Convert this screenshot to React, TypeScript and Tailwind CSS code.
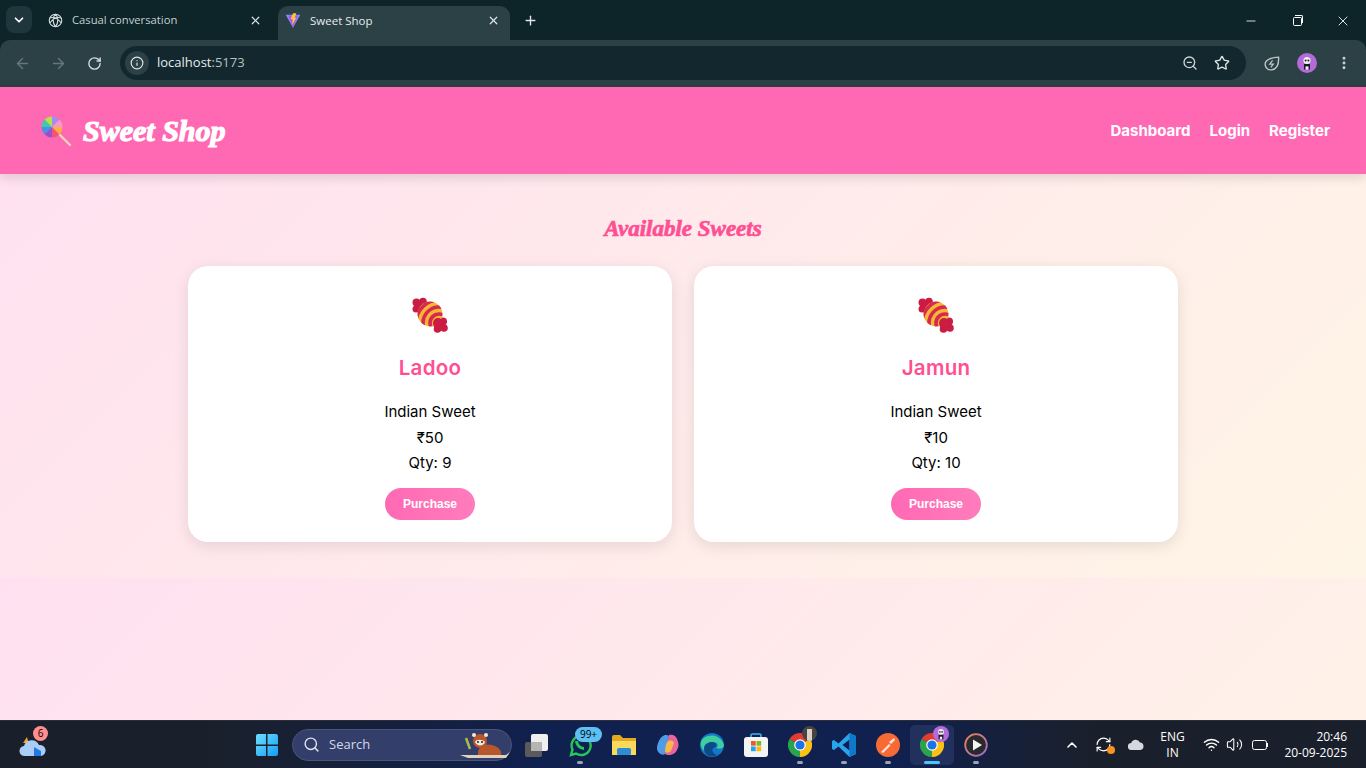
import { ArrowLeft, ArrowRight, ChevronDown, ChevronUp, EllipsisVertical, Info, Minus, Plus, RefreshCw, RotateCw, Search, Star, Volume2, Wifi, X, ZoomOut } from 'lucide-react';

const sweets = [
  { name: 'Ladoo', price: '₹50', qty: 9 },
  { name: 'Jamun', price: '₹10', qty: 10 },
];

const Chrome = ({ size = 24 }: { size?: number }) => (
  <svg width={size} height={size} viewBox="0 0 24 24">
    <path d="M12 12L1.6 6A12 12 0 0 1 22.4 6Z" fill="#e33b2e" />
    <path d="M12 12L22.4 6A12 12 0 0 1 12 24Z" fill="#fbc116" />
    <path d="M12 12L12 24A12 12 0 0 1 1.6 6Z" fill="#2ba24c" />
    <circle cx="12" cy="12" r="5.8" fill="#fff" />
    <circle cx="12" cy="12" r="4.6" fill="#1a73e8" />
  </svg>
);

const Panda = ({ size = 20 }: { size?: number }) => (
  <svg width={size} height={size} viewBox="0 0 20 20">
    <circle cx="10" cy="10" r="10" fill="#b46ad8" />
    <circle cx="10" cy="7.5" r="3.6" fill="#eee" />
    <circle cx="8.6" cy="7.4" r="1" fill="#222" />
    <circle cx="11.4" cy="7.4" r="1" fill="#222" />
    <path d="M7 11h6v5.5h-1.6v-3h-2.8v3H7z" fill="#1b1b1b" />
    <path d="M8.6 13.5h2.8v3H8.6z" fill="#eee" />
  </svg>
);

const Lollipop = () => {
  const colors = ['#fbb040', '#f0567a', '#9b4fc9', '#4f8fe8', '#3fc8b0', '#b7e04f', '#a58cf0', '#f59ac0'];
  return (
    <svg width="32" height="32" viewBox="0 0 32 32">
      <path d="M17 17L30 30" stroke="#f0d9b5" strokeWidth="2.2" strokeLinecap="round" />
      {colors.map((c, i) => {
        const a = (i * Math.PI) / 4;
        const b = ((i + 1) * Math.PI) / 4;
        const r = 10.5;
        return (
          <path
            key={c}
            d={`M12 12Q${12 + 8 * Math.cos(a + 0.9)} ${12 + 8 * Math.sin(a + 0.9)} ${12 + r * Math.cos(b)} ${12 + r * Math.sin(b)}A${r} ${r} 0 0 0 ${12 + r * Math.cos(a)} ${12 + r * Math.sin(a)}Z`}
            fill={c}
          />
        );
      })}
    </svg>
  );
};

const Candy = ({ id }: { id: string }) => (
  <svg width="36" height="36" viewBox="0 0 36 36">
    <defs>
      <clipPath id={id}>
        <circle cx="18" cy="17" r="12.5" />
      </clipPath>
    </defs>
    <g fill="#cb1c44">
      <circle cx="4.5" cy="5.5" r="4" />
      <circle cx="11" cy="4.5" r="3.8" />
      <circle cx="4" cy="12" r="3.5" />
      <circle cx="9" cy="9.5" r="5" />
      <circle cx="31" cy="24.5" r="4" />
      <circle cx="32" cy="31" r="3.8" />
      <circle cx="25.5" cy="32" r="3.8" />
      <circle cx="26" cy="26" r="5.5" />
    </g>
    <g clipPath={`url(#${id})`}>
      <circle cx="18" cy="17" r="12.5" fill="#f7b733" />
      <path d="M4 22c2 5 7 8 12 8l-6-2z" fill="#e98a68" />
      <g fill="none" stroke="#d6294f" strokeWidth="3.6">
        <circle cx="27" cy="26" r="9" />
        <circle cx="27" cy="26" r="16" />
        <circle cx="27" cy="26" r="23" />
      </g>
    </g>
    <circle cx="26" cy="26" r="5" fill="#cb1c44" />
  </svg>
);

const TabIconOpenAi = () => (
  <svg width="15" height="15" viewBox="0 0 24 24" fill="none" stroke="#d5dcdd" strokeWidth="1.8">
    <circle cx="12" cy="12" r="10" />
    <path d="M12 2C7 6 7 16 12 22M12 2c5 4 5 14 0 20M3 8c6-2 13 1 18 8M3 16c5-7 12-10 18-8" />
  </svg>
);

const Vite = () => (
  <svg width="17" height="17" viewBox="0 0 24 24">
    <path d="M1 3.5L23 3.5L12 23Z" fill="#7c8cf8" />
    <path d="M5 5L19 5L12 23Z" fill="#b14ff0" />
    <path d="M12 1L17 1L14.5 8L17 8L10.5 19L11.5 10L8.5 10Z" fill="#fdc72e" />
  </svg>
);

const Tab = ({ active, title, icon }: { active?: boolean; title: string; icon: React.ReactNode }) => (
  <div className={active ? 'flex h-[34px] w-[232px] items-center rounded-t-[10px] bg-[#2b4146] pb-[5px] pl-[7px] pr-[10px]' : 'flex h-[34px] w-[232px] items-center pb-[5px] pl-[7px] pr-[10px]'}>
    <div className="flex w-[16px] justify-center">{icon}</div>
    <span className={active ? 'ml-[9px] flex-1 text-[11.5px] text-[#e6ecec]' : 'ml-[9px] flex-1 text-[11.25px] text-[#c6d0d2]'}>{title}</span>
    <X size={13} strokeWidth={2.2} className="text-[#dfe6e7]" />
  </div>
);

const BrowserBar = () => (
  <div className="shrink-0 bg-[#0d2429] font-['Open_Sans',sans-serif]">
    <div className="flex h-[40px] items-end pl-[6px]">
      <div className="mb-[7px] flex h-[27px] w-[26px] items-center justify-center rounded-[8px] bg-[#1f363c]">
        <ChevronDown size={14} strokeWidth={3} className="text-white" />
      </div>
      <div className="ml-[8px] flex gap-[6px]">
        <Tab title="Casual conversation" icon={<TabIconOpenAi />} />
        <Tab active title="Sweet Shop" icon={<Vite />} />
      </div>
      <Plus size={15} strokeWidth={2.2} className="mb-[12px] ml-[13px] text-[#dfe6e7]" />
      <div className="mb-[11px] ml-auto flex items-center text-white">
        <div className="flex w-[46px] justify-center"><Minus size={14} strokeWidth={1.4} /></div>
        <div className="flex w-[46px] justify-center">
          <div className="relative h-[9px] w-[9px] rounded-[1.5px] border border-white">
            <div className="absolute left-[1px] top-[-3px] h-[8px] w-[8px] rounded-tr-[2px] border-r border-t border-white" />
          </div>
        </div>
        <div className="flex w-[46px] justify-center"><X size={16} strokeWidth={1.3} /></div>
      </div>
    </div>
    <div className="flex h-[47px] items-start rounded-t-[10px] bg-[#2b4146] pl-[12px] pt-[6px]">
      <div className="flex h-[34px] w-[108px] items-center gap-[19px] pl-[2px]">
        <ArrowLeft size={17} className="text-[#64777b]" />
        <ArrowRight size={17} className="text-[#64777b]" />
        <RotateCw size={15} strokeWidth={2.2} className="ml-[1px] text-[#d5dcdd]" />
      </div>
      <div className="flex h-[34px] w-[1126px] items-center rounded-full bg-[#12282e] pl-[5px] pr-[16px]">
        <div className="flex h-[24px] w-[24px] items-center justify-center rounded-full bg-[#2b4146]">
          <Info size={14} className="text-[#dfe6e7]" />
        </div>
        <span className="ml-[8px] text-[13px] text-[#e6ecec]">localhost<span className="text-[#b6c2c4]">:5173</span></span>
        <ZoomOut size={16} className="ml-auto text-[#cdd6d7]" />
        <Star size={16} strokeWidth={2} className="ml-[16px] text-[#dfe6e7]" />
      </div>
      <div className="flex h-[34px] flex-1 items-center">
        <svg width="17" height="17" viewBox="0 0 24 24" fill="none" stroke="#b9c6c8" strokeWidth="2" className="ml-[17px]">
          <path d="M22 3c.5 9-2 17-10 18-5 .5-9-3-9-8C3 7 12 3 22 3z" />
          <path d="M13.5 7.5L9.5 13h5l-3.5 4.5" strokeWidth="1.8" />
        </svg>
        <div className="ml-[17px]"><Panda /></div>
        <EllipsisVertical size={16} strokeWidth={2.4} className="ml-[19px] text-[#c9d3d5]" />
      </div>
    </div>
  </div>
);

const Card = ({ name, price, qty }: { name: string; price: string; qty: number }) => (
  <div className="flex h-[276px] flex-col items-center rounded-[20px] bg-white pt-[31px] text-[15px] text-black shadow-[0_4px_16px_rgba(0,0,0,0.1)] font-['Inter',sans-serif]">
    <Candy id={`candy-${name}`} />
    <h3 className="mt-[21px] text-[20.5px] font-semibold leading-[28px] tracking-[0.3px] text-[#ff4f93]">{name}</h3>
    <p className="mt-[17px] leading-[26px]">Indian Sweet</p>
    <p className="leading-[26px]">{price}</p>
    <p className="leading-[24px]">Qty: {qty}</p>
    <button className="mt-[13px] h-[32px] w-[90px] rounded-full bg-gradient-to-r from-[#ff69b4] to-[#ff7cbc] text-[12px] font-bold text-white font-['Liberation_Sans',sans-serif]">
      Purchase
    </button>
  </div>
);

const App = () => (
  <div className="flex h-screen flex-col overflow-hidden">
    <BrowserBar />
    <div className="relative flex-1 bg-[linear-gradient(135deg,#ffe0f0,#fff5e6)] bg-[length:100%_491px]">
      <header className="flex h-[87px] items-center justify-between bg-[#ff69b4] pl-[40px] pr-[36px] shadow-[0_4px_10px_rgba(0,0,0,0.12)]">
        <div className="flex items-center">
          <Lollipop />
          <span className="ml-[11px] text-[30px] font-bold italic text-white [-webkit-text-stroke:1.2px_white] font-['Liberation_Serif',serif]">Sweet Shop</span>
        </div>
        <nav className="flex gap-[19px] pt-[1px] text-[15px] font-bold text-white font-['Inter',sans-serif]">
          <span>Dashboard</span>
          <span>Login</span>
          <span>Register</span>
        </nav>
      </header>
      <main className="mx-auto w-[990px] pt-[36px]">
        <h2 className="text-center text-[23px] font-bold italic leading-[38px] text-[#ff4f93] [-webkit-text-stroke:0.7px_#ff4f93] font-['Liberation_Serif',serif]">Available Sweets</h2>
        <div className="mt-[18px] grid grid-cols-2 gap-[22px]">
          {sweets.map((s) => <Card key={s.name} {...s} />)}
        </div>
      </main>
    </div>
    <Taskbar />
  </div>
);

const Win = () => (
  <svg width="24" height="24" viewBox="0 0 24 24">
    <defs>
      <linearGradient id="w" x1="0" y1="0" x2="1" y2="1">
        <stop offset="0" stopColor="#6fe0fb" />
        <stop offset="1" stopColor="#129ef5" />
      </linearGradient>
    </defs>
    <path d="M1 3a2 2 0 0 1 2-2h8v10.5H1zM12.5 1h8.500a2 2 0 0 1 2 2v8.5H12.5zM1 13h10v10H3a2 2 0 0 1-2-2zM12.5 13H23v8a2 2 0 0 1-2 2h-8.500z" fill="url(#w)" />
  </svg>
);

const apps: React.ReactNode[] = [
  <svg key="tv" width="24" height="24" viewBox="0 0 24 24">
    <rect x="1" y="9" width="17" height="15" rx="2" fill="#5a5a5a" />
    <rect x="7" y="1" width="17" height="17" rx="2" fill="#efefef" />
    <rect x="7" y="9" width="11" height="9" fill="#b5b5b5" />
  </svg>,
  <div key="wa" className="relative">
    <svg width="24" height="24" viewBox="0 0 24 24" fill="none" stroke="#27c65a" strokeWidth="2.4">
      <path d="M3 22l1.5-5.500A9.500 9.500 0 1 1 8 20.500z" />
      <path d="M8.500 8c0 4 3.500 7.500 7.500 7.500" strokeWidth="3" />
    </svg>
    <span className="absolute left-[7px] top-[-6px] flex h-[15px] w-[27px] items-center justify-center rounded-full bg-[#5cc0f5] text-[10px] text-black">99+</span>
  </div>,
  <svg key="fo" width="24" height="24" viewBox="0 0 24 24">
    <path d="M0 4a2 2 0 0 1 2-2h6l3 3h13v17H0z" fill="#e5a91f" />
    <path d="M0 8h24v13a1 1 0 0 1-1 1H1a1 1 0 0 1-1-1z" fill="#fbd95c" />
    <rect x="5" y="15" width="14" height="7" rx="1.5" fill="#2b8fd8" />
  </svg>,
  <svg key="co" width="24" height="24" viewBox="0 0 24 24">
    <path d="M7 3c1-1.500 5-1.500 6 0L9 21c-2 1.500-5 0-6-1-3-3-2-7-1-10 1-3 3-6 5-7z" fill="#4f9be8" />
    <path d="M13 2c4-1 7 1 8 4 2 4 2 8 0 11-1 3-5 5-8 5-2 0-3-.5-4-1z" fill="#e8649c" />
    <path d="M12 8c3-1 6 0 6 2l-3 8c-2 2-5 2-6 1 0-4 1-9 3-11z" fill="#f7b94a" />
  </svg>,
  <svg key="ed" width="24" height="24" viewBox="0 0 24 24">
    <circle cx="12" cy="12" r="12" fill="#1478c8" />
    <path d="M1 9C3 2 19-2 24 12c0 3-4 5-8 3 3-2 2-6-3-6C7 9 4 14 8 20 3 18 0 14 1 9z" fill="#3ecf9e" />
    <path d="M4 16c0-5 4-7 8-7 3 0 5 2 4 5-5 0-5 6 1 8-7 4-13-1-13-6z" fill="#0c4a8a" />
  </svg>,
  <svg key="st" width="24" height="24" viewBox="0 0 24 24">
    <path d="M7 5V2.500A1.500 1.500 0 0 1 8.500 1h7A1.500 1.500 0 0 1 17 2.500V5" fill="none" stroke="#3fb4ee" strokeWidth="1.6" />
    <rect x="0" y="4" width="24" height="20" rx="3" fill="#f4f4f4" />
    <rect x="7" y="8" width="4.7" height="4.7" fill="#ee5a2d" />
    <rect x="12.5" y="8" width="4.7" height="4.7" fill="#7fba2a" />
    <rect x="7" y="13.5" width="4.7" height="4.7" fill="#1ea5ee" />
    <rect x="12.5" y="13.5" width="4.7" height="4.7" fill="#fcb80f" />
  </svg>,
  <div key="c1" className="relative">
    <Chrome />
    <div className="absolute left-[14px] top-[-7px] h-[15px] w-[15px] overflow-hidden rounded-full bg-[#4a4340]">
      <div className="ml-[5px] mt-[3px] h-[12px] w-[5px] bg-[#d9d2c8]" />
    </div>
  </div>,
  <svg key="vs" width="24" height="24" viewBox="0 0 24 24">
    <path d="M17.5 0L24 3v18l-6.500 3L6.500 13.500 2 17l-2-1V8l2-1 4.500 3.500z" fill="#2aa3ee" />
    <path d="M17.5 6.500L10.500 12l7 5.500z" fill="#0e2050" />
    <path d="M17.5 0L24 3v18l-6.500 3z" fill="#0f78c9" />
  </svg>,
  <svg key="pm" width="24" height="24" viewBox="0 0 24 24">
    <circle cx="12" cy="12" r="12" fill="#f76935" />
    <path d="M5 19l8-8 1.500 1.500L7 20zM13 9l5-4 1 2-4 4z" fill="#ffe6da" />
  </svg>,
  <div key="c2" className="relative">
    <Chrome />
    <div className="absolute left-[13px] top-[-7px]"><Panda size={16} /></div>
  </div>,
  <svg key="pl" width="24" height="24" viewBox="0 0 24 24">
    <defs>
      <linearGradient id="ring" x1="0" y1="0" x2="1" y2="1">
        <stop offset="0" stopColor="#e8835c" />
        <stop offset="1" stopColor="#9a6fc8" />
      </linearGradient>
    </defs>
    <circle cx="12" cy="12" r="10.8" fill="#2a2a2e" stroke="url(#ring)" strokeWidth="1.8" />
    <path d="M9 6.500L18 12 9 17.500z" fill="#f4f4f4" />
  </svg>,
];

const dotted = [false, true, false, false, false, false, true, true, true, true, true];

const Taskbar = () => (
  <div className="flex h-[48px] shrink-0 items-center border-t border-[#2a2f3a] bg-[linear-gradient(90deg,#1a202b_0%,#1a202b_15%,#10204f_40%,#10204f_65%,#1a202b_80%,#1a202b_100%)] font-['Open_Sans',sans-serif] text-white">
    <div className="relative ml-[19px] h-[24px] w-[26px]">
      <svg width="27" height="24" viewBox="0 0 27 24">
        <path d="M4 10L8 4l1 4 6 2z" fill="#f5a623" />
        <path d="M6 23a5 5 0 0 1-1-10 8 8 0 0 1 15-1 5.500 5.500 0 0 1 2 11z" fill="#a9cdf5" />
        <path d="M15 14l7 4v5h-7z" fill="#1f7ae8" />
      </svg>
      <span className="absolute left-[14px] top-[-7px] flex h-[15px] w-[15px] items-center justify-center rounded-full bg-[#ff8f8f] text-[10px] text-black">6</span>
    </div>
    <div className="ml-[210px] flex items-center">
      <Win />
    </div>
    <div className="ml-[13px] flex h-[32px] w-[220px] items-center rounded-full border border-[#4a5478] bg-[#333e6b] pl-[10px]">
      <Search size={17} strokeWidth={2} className="text-[#e0e4ec]" />
      <span className="ml-[9px] text-[13px] text-[#d5d9e4]">Search</span>
      <svg width="50" height="30" viewBox="0 0 50 30" className="ml-auto mr-[1px]">
        <path d="M0 25h46l4-3-4 6H8z" fill="#dcd3bf" />
        <path d="M18 25c-1-8 6-12 14-10 8 2 10 7 9 10z" fill="#b8562e" />
        <circle cx="20" cy="11" r="7" fill="#b8562e" />
        <circle cx="14" cy="5" r="2" fill="#f1ead9" />
        <circle cx="26" cy="5" r="2" fill="#f1ead9" />
        <path d="M15 12c1-3 8-3 10 0-1 4-8 5-10 0z" fill="#f1ead9" />
        <circle cx="18" cy="12" r="1" fill="#222" />
        <circle cx="22" cy="12" r="1" fill="#222" />
        <path d="M6 8l4 11" stroke="#aabb4d" strokeWidth="2.5" />
      </svg>
    </div>
    <div className="ml-[2px] flex">
      {apps.map((a, i) => (
        <div key={i} className={i === 9 ? 'relative flex h-[40px] w-[44px] items-center justify-center rounded-[5px] bg-[#22305e]' : 'relative flex h-[40px] w-[44px] items-center justify-center'}>
          {a}
          {dotted[i] && (
            <span className={i === 9 ? 'absolute bottom-[1px] left-[14px] h-[3px] w-[16px] rounded-full bg-[#4cc2ff]' : 'absolute bottom-[1px] left-[19px] h-[3px] w-[6px] rounded-full bg-[#9aa3b5]'} />
          )}
        </div>
      ))}
    </div>
    <div className="ml-auto flex items-center">
      <ChevronUp size={16} strokeWidth={2.4} />
      <div className="relative ml-[15px]">
        <RefreshCw size={17} strokeWidth={1.6} />
        <span className="absolute bottom-[-1px] right-[-3px] h-[8px] w-[8px] rounded-full bg-[#f7931e]" />
      </div>
      <svg width="16" height="11" viewBox="0 0 16 11" className="ml-[16px]">
        <path d="M3.500 11a3.500 3.500 0 0 1-.3-7A4.800 4.800 0 0 1 12 3.500 3.800 3.800 0 0 1 12.500 11z" fill="#d5d8de" />
      </svg>
      <div className="ml-[9px] w-[40px] text-center text-[12px] leading-[16px]">ENG<br />IN</div>
      <Wifi size={17} strokeWidth={2} className="ml-[10px]" />
      <Volume2 size={17} strokeWidth={1.5} className="ml-[6px]" />
      <div className="ml-[9px] flex items-center">
        <div className="h-[10px] w-[15px] rounded-[2.5px] border border-white" />
        <div className="h-[4px] w-[1.5px] bg-white" />
      </div>
      <div className="ml-[12px] mr-[19px] w-[67px] text-right text-[12px] leading-[16px]">20:46<br />20-09-2025</div>
    </div>
  </div>
);

export default App;
